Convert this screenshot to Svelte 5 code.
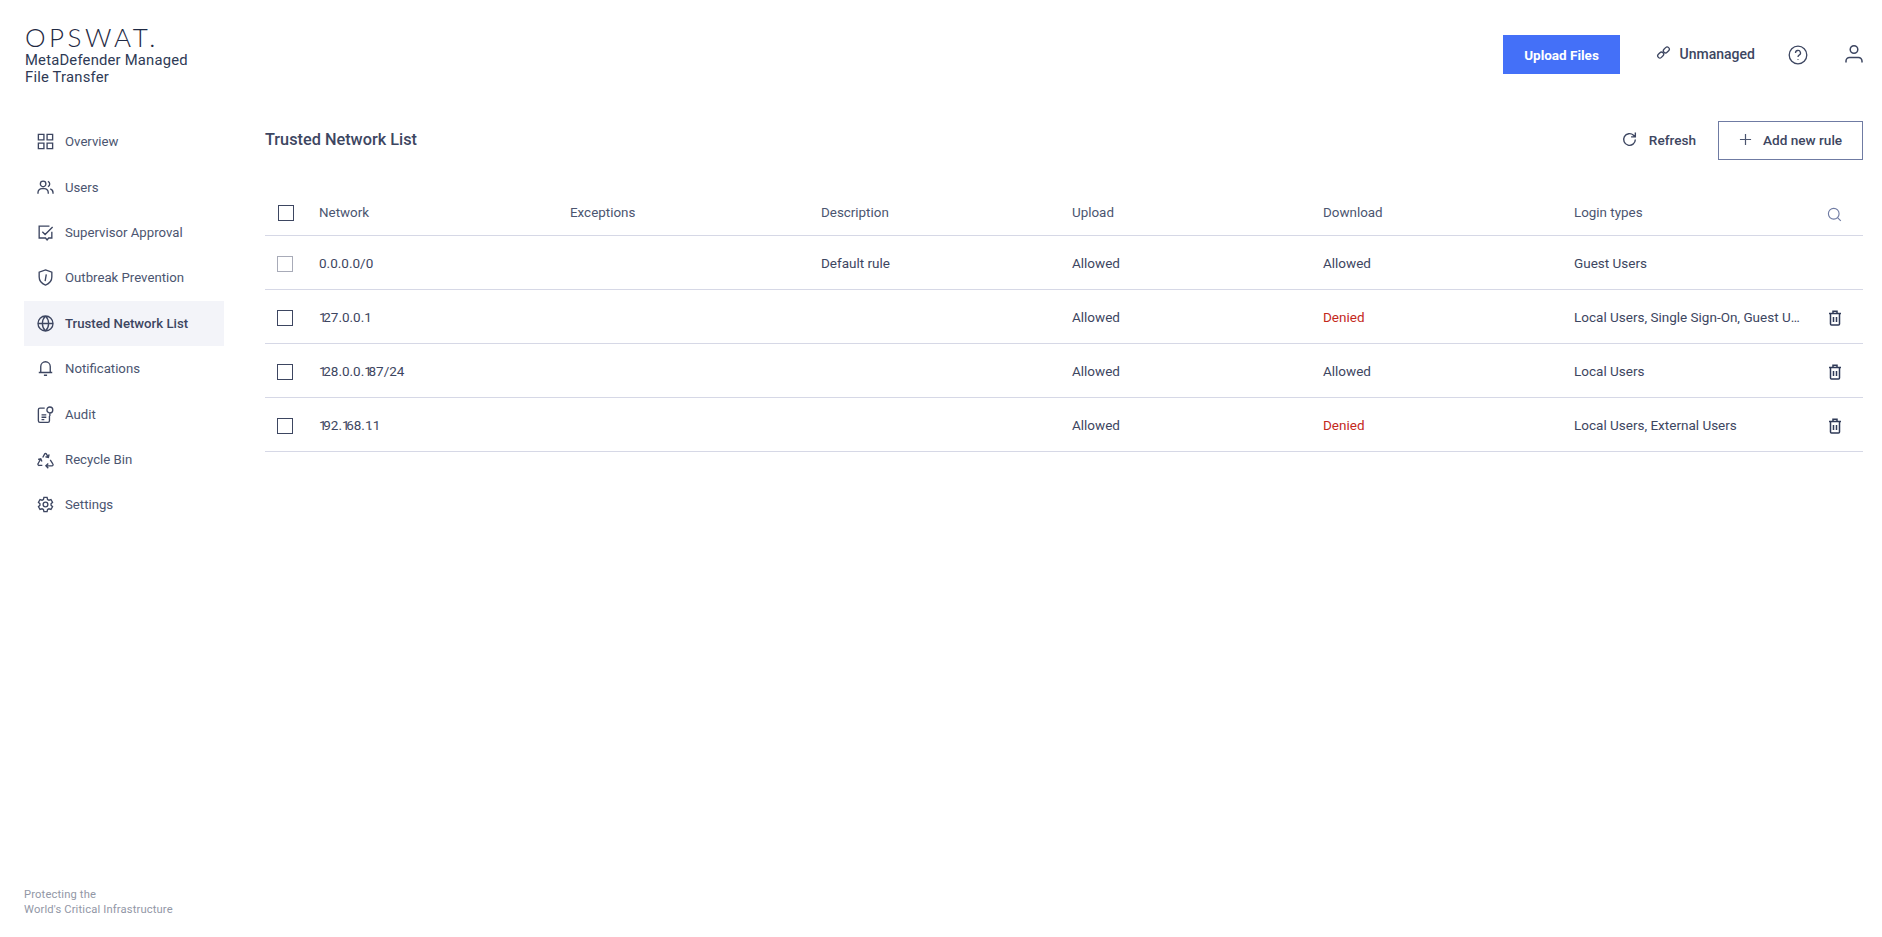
<script>
  const nav = [
    { label: 'Overview', icon: 'grid' },
    { label: 'Users', icon: 'users' },
    { label: 'Supervisor Approval', icon: 'approve' },
    { label: 'Outbreak Prevention', icon: 'shield' },
    { label: 'Trusted Network List', icon: 'globe', active: true },
    { label: 'Notifications', icon: 'bell' },
    { label: 'Audit', icon: 'audit' },
    { label: 'Recycle Bin', icon: 'recycle' },
    { label: 'Settings', icon: 'gear' }
  ];
  const icons = {
    grid: 'M3 3h7v7H3zM14 3h7v7h-7zM3 14h7v7H3zM14 14h7v7h-7z',
    users: 'M9 11a3.500 3.500 0 1 0 0-7 3.500 3.500 0 0 0 0 7zM2.500 20v-1.500a5 5 0 0 1 5-5h3a5 5 0 0 1 5 5V20M15 4.200a3.500 3.500 0 0 1 0 6.600M18 13.800a5 5 0 0 1 3.500 4.700V20',
    approve: 'M20 11v8h-4l-2 2.500-2-2.500H4V4h13M8 11l3.500 3.500L21 5',
    shield: 'M12 2.500l8 2.700v6.300c0 5-3.500 8.500-8 10-4.500-1.500-8-5-8-10V5.200zM13 8l-1.500 8.500',
    globe: 'M12 2.500a9.500 9.500 0 1 0 0 19 9.500 9.500 0 0 0 0-19zM2.500 12h19M12 2.500c-5.300 5.300-5.300 13.700 0 19M12 2.500c5.300 5.300 5.300 13.700 0 19',
    bell: 'M6 17V9.500a6 6 0 0 1 12 0V17M3.500 17h17M10 20.500h4',
    audit: 'M11 4H5a2 2 0 0 0-2 2v14a2 2 0 0 0 2 2h10a2 2 0 0 0 2-2v-6M7 12.500h6M7 15.500h6M7 18.500h3.500M17.500 2.500a3.700 3.700 0 1 0 0 7.400 3.700 3.700 0 0 0 0-7.400zM17.500 10v4',
    recycle: 'M8.500 9.500L11 5a1.200 1.200 0 0 1 2 0l2.700 4.300M16.500 5.500l-.8 3.800-3.700-.8M6 11l-3.200 6a1.500 1.500 0 0 0 1.300 2.500H8M2.700 12l3.300-1 1.500 3.500M18 12.500l3.200 5a1.500 1.500 0 0 1-1.300 2.500h-7.400M15.500 17l-3 3 3 3',
    gear: 'M12 9a3 3 0 1 0 0 6 3 3 0 0 0 0-6zM10 3h4l.6 2.600 1.800 1 2.500-.8 2 3.400-1.900 1.800v2l1.900 1.800-2 3.400-2.500-.8-1.800 1L14 21h-4l-.6-2.600-1.800-1-2.500.8-2-3.400L5 13v-2L3.100 9.200l2-3.400 2.500.8 1.800-1z'
  };
  const rows = [
    { net: '0.0.0.0/0', desc: 'Default rule', up: 'Allowed', down: 'Allowed', types: 'Guest Users', locked: true },
    { net: '127.0.0.1', desc: '', up: 'Allowed', down: 'Denied', types: 'Local Users, Single Sign-On, Guest Users, External Users' },
    { net: '128.0.0.187/24', desc: '', up: 'Allowed', down: 'Allowed', types: 'Local Users' },
    { net: '192.168.1.1', desc: '', up: 'Allowed', down: 'Denied', types: 'Local Users, External Users' }
  ];
  const heads = ['Network', 'Exceptions', 'Description', 'Upload', 'Download', 'Login types'];
</script>

<div class="page">
  <aside class="side">
    <div class="brand">
      <div class="logo">OPSWAT.</div>
      <div class="product">MetaDefender Managed<br />File Transfer</div>
    </div>
    <nav class="nav">
      {#each nav as item}
        <div class="nav-item" class:active={item.active}>
          <svg class="nav-ico" viewBox="0 0 24 24"><path d={icons[item.icon]} /></svg>
          <span>{item.label}</span>
        </div>
      {/each}
    </nav>
    <div class="tagline">Protecting the<br />World's Critical Infrastructure</div>
  </aside>

  <main class="main">
    <header class="top">
      <button class="upload">Upload Files</button>
      <div class="unmanaged">
        <svg class="link" viewBox="0 0 16 16">
          <rect x="7.500" y="3" width="7" height="4.600" rx="2.300" transform="rotate(-45 11 5.300)" />
          <rect x="1.500" y="8.400" width="7" height="4.600" rx="2.300" transform="rotate(-45 5 10.700)" />
        </svg>
        <span>Unmanaged</span>
      </div>
      <svg class="help" viewBox="0 0 20 20"><circle cx="10" cy="10" r="8.800" /><path d="M7.500 8a2.500 2.500 0 1 1 3.600 2.200c-.8.400-1.100.9-1.100 1.800M10 14v.8" /></svg>
      <svg class="user" viewBox="0 0 20 20"><circle cx="10" cy="5.500" r="3.800" /><path d="M2 18.500V17a3.500 3.500 0 0 1 3.500-3.500h9A3.500 3.500 0 0 1 18 17v1.500" /></svg>
    </header>

    <div class="title-row">
      <h1>Trusted Network List</h1>
      <div class="actions">
        <button class="refresh">
          <svg viewBox="0 0 16 16"><path d="M13.500 8a5.500 5.500 0 1 1-1.700-4l1.700 1.600M13.500 1.500v4h-4" /></svg>
          Refresh
        </button>
        <button class="add">
          <svg viewBox="0 0 14 14"><path d="M7 1v12M1 7h12" /></svg>
          Add new rule
        </button>
      </div>
    </div>

    <div class="table">
      <div class="row head">
        <div class="cell check"><span class="box hbox"></span></div>
        {#each heads as h}<div class="cell">{h}</div>{/each}
        <div class="cell tool">
          <svg class="search" viewBox="0 0 16 16"><circle cx="7.200" cy="7.200" r="5.700" /><path d="M11.500 11.500l3.200 3.200" /></svg>
        </div>
      </div>
      {#each rows as r}
        <div class="row">
          <div class="cell check"><span class="box" class:locked={r.locked}></span></div>
          <div class="cell">{#each r.net.split('') as ch}<span class:one={ch === '1'}>{ch}</span>{/each}</div>
          <div class="cell"></div>
          <div class="cell">{r.desc}</div>
          <div class="cell">{r.up}</div>
          <div class="cell" class:denied={r.down === 'Denied'}>{r.down}</div>
          <div class="cell types">{r.types}</div>
          <div class="cell tool">
            {#if !r.locked}
              <svg class="trash" viewBox="0 0 14 16"><path d="M1 3.500h12M5 3.500V1.200h4v2.300M2.500 3.500V14a1 1 0 0 0 1 1h7a1 1 0 0 0 1-1V3.500M5.500 7v5M8.500 7v5" /></svg>
            {/if}
          </div>
        </div>
      {/each}
    </div>
  </main>
</div>

<style>
  :global(body) {
    margin: 0;
    background: #fff;
    font-family: Roboto, "Liberation Sans", sans-serif;
    color: #3d4661;
  }
  .page {
    display: flex;
    height: 937px;
    overflow: hidden;
  }
  .side {
    width: 265px;
    flex: none;
    display: flex;
    flex-direction: column;
    padding-left: 24px;
    box-sizing: border-box;
  }
  .brand {
    padding: 22px 0 0 1px;
    height: 119px;
    box-sizing: border-box;
  }
  .logo {
    font-family: Lato, sans-serif;
    font-weight: 300;
    font-size: 26px;
    line-height: 30px;
    letter-spacing: 3.500px;
    color: #1f2a44;
  }
  .product {
    font-size: 14.800px;
    line-height: 17px;
    color: #2e3a55;
    letter-spacing: 0.2px;
  }
  .nav {
    width: 200px;
  }
  .nav-item {
    height: 45.400px;
    display: flex;
    align-items: center;
    padding-left: 11.500px;
    gap: 10.500px;
    font-size: 13.200px;
    color: #4b5570;
  }
  .nav-item.active {
    background: #f3f4f9;
    font-weight: 500;
    color: #3d4661;
  }
  .nav-ico {
    width: 19px;
    height: 19px;
    fill: none;
    stroke: #3d4661;
    stroke-width: 1.700;
  }
  .tagline {
    margin-top: auto;
    margin-bottom: 20px;
    font-size: 11.200px;
    line-height: 15px;
    color: #9297a6;
    letter-spacing: 0.15px;
  }
  .main {
    flex: 1;
    padding-right: 19px;
    min-width: 0;
  }
  .top {
    padding-top: 35px;
    height: 39px;
    display: flex;
    align-items: center;
  }
  .top > * {
    flex: none;
  }
  .upload {
    width: 117px;
    height: 39px;
    margin-left: 1238px;
    border: 0;
    background: #4470f8;
    color: #fff;
    font: 700 13.500px Roboto, sans-serif;
  }
  .unmanaged {
    margin-left: 36px;
    display: flex;
    align-items: center;
    gap: 8.500px;
    font-size: 14px;
    font-weight: 500;
    color: #3d4661;
    margin-top: -2px;
    width: 132px;
  }
  .link {
    width: 15px;
    height: 15px;
    fill: none;
    stroke: #3d4661;
    stroke-width: 1.400;
    margin-top: -3px;
  }
  .help {
    width: 20px;
    height: 20px;
    fill: none;
    stroke: #3d4661;
    stroke-width: 1.300;
  }
  .user {
    width: 20px;
    height: 20px;
    margin-left: 36px;
    fill: none;
    stroke: #3d4661;
    stroke-width: 1.500;
    margin-top: -2px;
  }
  .title-row {
    margin-top: 47px;
    height: 39px;
    display: flex;
    align-items: center;
    justify-content: space-between;
  }
  h1 {
    margin: -3px 0 0;
    font-size: 16.300px;
    font-weight: 500;
    color: #3d4661;
  }
  .actions {
    display: flex;
    align-items: center;
  }
  .actions button {
    display: flex;
    align-items: center;
    font: 500 13.600px Roboto, sans-serif;
    color: #3d4661;
    background: none;
    white-space: nowrap;
    padding-bottom: 2px;
  }
  .refresh {
    border: 0;
    padding: 0;
    gap: 11px;
    margin-right: 22px;
  }
  .refresh svg {
    width: 17px;
    height: 17px;
    fill: none;
    stroke: #3d4661;
    stroke-width: 1.300;
  }
  .add {
    width: 145px;
    height: 39px;
    border: 1px solid #6f7ba3;
    padding: 0 0 0 20px;
    gap: 11px;
  }
  .add svg {
    width: 13px;
    height: 13px;
    fill: none;
    stroke: #4b5570;
    stroke-width: 1.300;
  }
  .table {
    margin-top: 24px;
    font-size: 13.500px;
  }
  .row {
    display: grid;
    grid-template-columns: 54px repeat(5, 251px) 251px 1fr;
    height: 54px;
    box-sizing: border-box;
    border-bottom: 1px solid #d6d8e6;
    align-items: center;
    color: #3d4661;
  }
  .head {
    height: 52px;
    color: #4b5570;
    font-size: 13.400px;
  }
  .cell {
    min-width: 0;
  }
  .one {
    letter-spacing: -3.400px;
  }
  .head .cell {
    margin-top: 6px;
  }
  .check {
    padding-left: 12px;
    display: flex;
  }
  .box {
    width: 16px;
    height: 16px;
    box-sizing: border-box;
    border: 1.400px solid #3d4661;
    margin-top: 2px;
  }
  .hbox {
    margin: 0 0 0 1px;
  }
  .locked {
    border-color: #a8abb8;
  }
  .denied {
    color: #c4281c;
  }
  .types {
    white-space: nowrap;
    overflow: hidden;
    text-overflow: ellipsis;
    padding-right: 25px;
  }
  .tool {
    display: flex;
    justify-content: flex-end;
    padding-right: 21px;
  }
  .search {
    width: 15px;
    height: 15px;
    fill: none;
    stroke: #6f7ba3;
    stroke-width: 1.200;
    margin-top: 4px;
  }
  .trash {
    width: 14px;
    height: 16px;
    fill: none;
    stroke: #2f3a57;
    stroke-width: 1.500;
    margin-top: 3px;
  }
</style>
